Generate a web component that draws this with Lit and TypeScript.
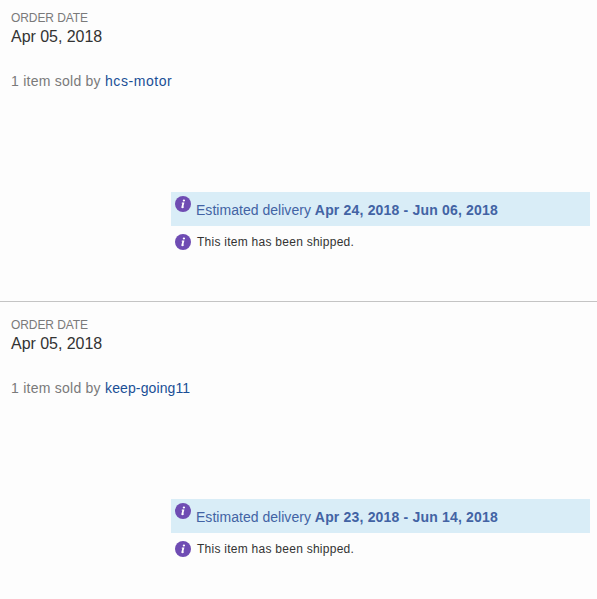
import { LitElement, html, css } from "lit";
import { customElement, property } from "lit/decorators.js";

@customElement("info-icon")
class InfoIcon extends LitElement {
  static styles = css`
    :host { display: block; width: 16px; height: 16px; }
    svg { display: block; }
  `;
  render() {
    return html`<svg width="16" height="16" viewBox="0 0 16 16">
      <circle cx="8" cy="8" r="8" fill="#6f4cb3" />
      <ellipse cx="8.9" cy="4.6" rx="1.15" ry="1" fill="#fff" />
      <path d="M6.9 6.5H9.4L8.3 10.8L9.1 10.6L8.8 11.6Q7.8 12.3 6.8 12.1Q6.2 11.9 6.4 11.1L7.3 7.5H6.6Z" fill="#fff" />
    </svg>`;
  }
}

@customElement("order-card")
class OrderCard extends LitElement {
  @property() date = "";
  @property() seller = "";
  @property() estimate = "";

  static styles = css`
    :host { display: block; box-sizing: border-box; height: 307px; padding: 10px 7px 0 11px; }
    .label { font-size: 12px; line-height: 16px; letter-spacing: -0.08px; color: #7a7a7a; }
    .date { font-size: 16px; line-height: 22px; letter-spacing: -0.04px; color: #333; }
    .sold { margin-top: 24px; font-size: 14px; line-height: 18px; letter-spacing: 0.25px; color: #7a7a7a; }
    .seller { color: #1a4f96; text-decoration: none; }
    .seller.spaced { letter-spacing: 0.55px; }
    .seller.tight { letter-spacing: 0.12px; }
    .status { margin: 102px 0 0 160px; }
    .delivery { display: flex; height: 34px; background: #d9edf7; color: #4263a4; font-size: 14px; line-height: 36px; letter-spacing: 0.03px; padding-left: 4px; gap: 5px; white-space: nowrap; }
    .delivery b { letter-spacing: 0.18px; }
    .delivery info-icon { margin-top: 4px; }
    .shipped { display: flex; align-items: center; margin-top: 8px; padding-left: 4px; gap: 6px; height: 16px; font-size: 12px; line-height: 16px; letter-spacing: 0.26px; color: #333; }
  `;
  render() {
    const spacing = this.seller.length > 10 ? "tight" : "spaced";
    return html`
      <div class="label">ORDER DATE</div>
      <div class="date">${this.date}</div>
      <div class="sold">1 item sold by <a class="seller ${spacing}">${this.seller}</a></div>
      <div class="status">
        <div class="delivery"><info-icon></info-icon><div>Estimated delivery <b>${this.estimate}</b></div></div>
        <div class="shipped"><info-icon></info-icon><span>This item has been shipped.</span></div>
      </div>
    `;
  }
}

@customElement("app-root")
class AppRoot extends LitElement {
  static styles = css`
    :host { display: block; height: 599px; overflow: hidden; background: #fdfdfd; font-family: "Liberation Sans", Arial, sans-serif; }
    .first { box-sizing: border-box; height: 302px; border-bottom: 1px solid #c4c4c4; margin-bottom: 5px; }
  `;
  render() {
    return html`
      <order-card class="first" date="Apr 05, 2018" seller="hcs-motor" estimate="Apr 24, 2018 - Jun 06, 2018"></order-card>
      <order-card date="Apr 05, 2018" seller="keep-going11" estimate="Apr 23, 2018 - Jun 14, 2018"></order-card>
    `;
  }
}
